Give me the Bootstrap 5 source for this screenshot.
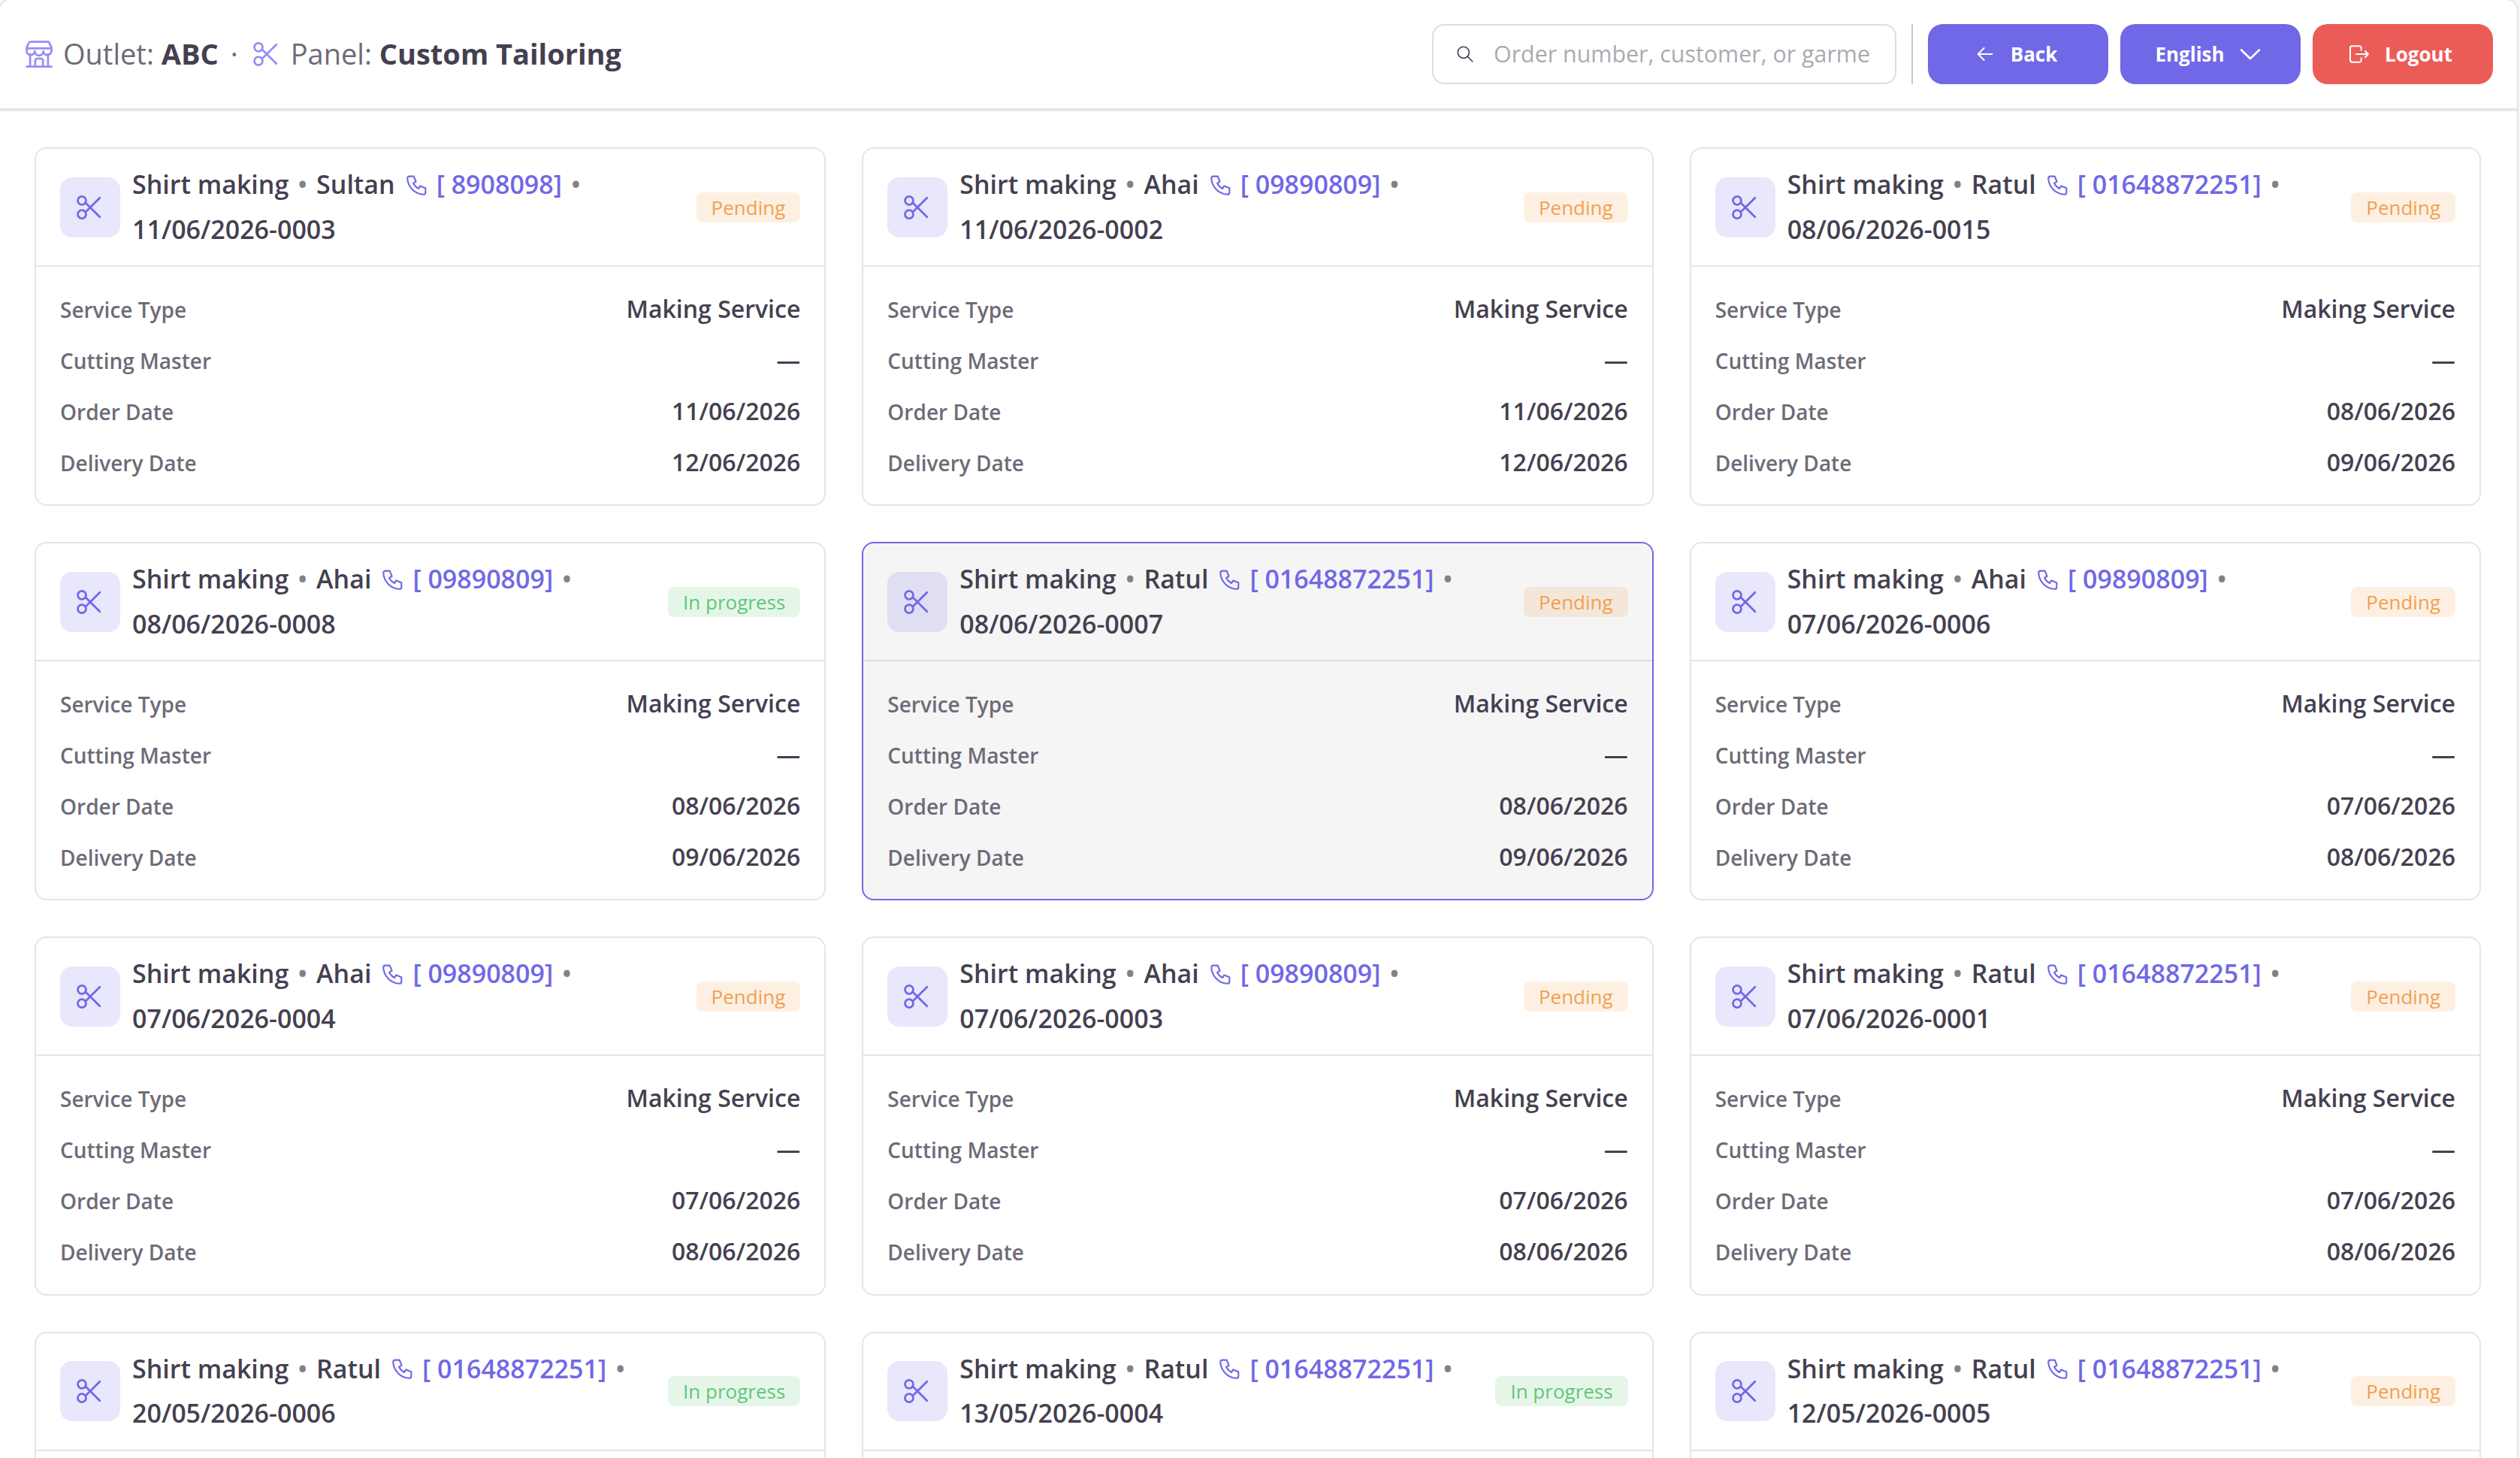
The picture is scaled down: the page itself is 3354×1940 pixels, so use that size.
<!DOCTYPE html>
<html lang="en">
<head>
  <meta charset="UTF-8" />
  <meta name="viewport" content="width=device-width, initial-scale=1.0"/>
  <title>Custom Tailoring</title>
  <link href="https://cdn.jsdelivr.net/npm/bootstrap@5.3.3/dist/css/bootstrap.min.css" rel="stylesheet"/>
  <style>
    :root {
      --brand: #7068e6;
      --heading: #444050;
      --soft: #6d6b77;
      --line: #e5e5e6;
    }

    body {
      height: 100vh;
      overflow: hidden;
      background-color: #f7f7f9;
      color: var(--heading);
      font-family: "Open Sans", "Noto Sans", sans-serif;
      font-size: 32px;
      line-height: 48px;
    }

    .icon {
      flex: none;
      fill: none;
      stroke: currentColor;
      stroke-width: 1.5;
      stroke-linecap: round;
      stroke-linejoin: round;
    }

    .panel {
      width: 3354px;
      min-height: 1942px;
      margin: -2px 0 0 -2px;
      border: 2px solid var(--line);
      border-radius: 16px 16px 0 0;
      background-color: #fff;
    }

    /* Top bar */
    .topbar {
      height: 148px;
      padding: 0 32px 0 30px;
      border-bottom: 4px solid #e6e6e8;
    }

    .crumb {
      font-size: 38px;
      color: var(--soft);
    }

    .crumb span {
      padding-bottom: 2px;
    }

    .crumb .icon {
      width: 44px;
      height: 44px;
      margin-right: 10px;
      color: #968ff3;
    }

    .crumb b {
      color: var(--heading);
      font-weight: 700;
    }

    .search-box {
      width: 618px;
      height: 80px;
      padding: 0 32px 0 29px;
      border: 2px solid #dededf;
      border-radius: 16px;
    }

    .search-box .icon {
      width: 26px;
      height: 26px;
    }

    .search-box input {
      margin-left: 25px;
      padding: 0;
      border: 0;
      font-size: 30.4px;
      background: transparent;
    }

    .search-box input::placeholder {
      color: #acaab1;
      opacity: 1;
    }

    .split {
      width: 2px;
      height: 80px;
      margin: 0 20px;
      background-color: #c9c8cd;
    }

    .top-btn {
      width: 240px;
      height: 80px;
      border: 0;
      border-radius: 20px;
      font-size: 26px;
      font-weight: 700;
      color: #fff;
    }

    .top-btn .icon {
      width: 32px;
      height: 32px;
      margin: 0 18px 0 -8px;
    }

    .top-btn .chevron {
      width: 44px;
      height: 44px;
      margin: 0 -1px 0 12px;
    }

    .btn-brand, .btn-brand:hover { background-color: var(--brand); color: #fff; }
    .btn-exit, .btn-exit:hover { background-color: #eb5c58; color: #fff; }

    /* Order cards */
    .orders {
      display: grid;
      grid-template-columns: repeat(3, 1fr);
      gap: 48px;
      padding: 48px 48px 48px 46px;
    }

    .order {
      border: 2px solid var(--line);
      border-radius: 16px;
      background-color: #fff;
    }

    .order.active {
      border-color: var(--brand);
      background-color: #f5f5f5;
    }

    .order .card-header {
      padding: 18px 32px;
      border-bottom: 2px solid var(--line);
      background: transparent;
    }

    .order.active .card-header {
      border-bottom-color: #dcdcdd;
    }

    .order .card-body {
      flex: none;
      height: 316.2px;
      padding: 32px;
      gap: 20px;
    }

    .tile {
      width: 80px;
      height: 80px;
      border-radius: 16px;
      background-color: rgba(112, 104, 230, .16);
      color: var(--brand);
    }

    .tile .icon {
      width: 44px;
      height: 44px;
    }

    .order-title {
      column-gap: 12px;
      font-size: 34px;
      font-weight: 600;
      line-height: 59.5px;
    }

    .order-title .dot {
      color: #82808b;
    }

    .order-title .tel {
      gap: 9px;
      color: var(--brand);
    }

    .order-title .tel .icon {
      width: 34px;
      height: 34px;
    }

    .status {
      height: 40px;
      padding: 0 20px;
      border-radius: 8px;
      font-size: 26px;
      line-height: 40px;
    }

    .status-pending { color: #f2a04f; background-color: rgba(240, 160, 80, .16); }
    .status-progress { color: #5fc678; background-color: rgba(95, 200, 120, .16); }

    .field-row {
      height: 48px;
    }

    .field-name {
      font-size: 28px;
      font-weight: 600;
      color: var(--soft);
    }

    .field-value {
      font-weight: 600;
    }
  </style>
</head>
<body>
  <!-- Icons -->
  <svg class="d-none">
    <symbol id="scissors" viewBox="0 0 24 24">
      <circle cx="6" cy="7" r="3"/><circle cx="6" cy="17" r="3"/>
      <path d="M8.6 8.6 19 19M8.6 15.4 19 5"/>
    </symbol>
    <symbol id="store" viewBox="0 0 24 24">
      <path d="M5.6 3h12.8c.5 0 .8.2 1 .7L21 7.3v2a2.9 2.9 0 0 1-5.9.6 3.1 3.1 0 0 1-6.2 0A2.9 2.9 0 0 1 3 9.3v-2l1.6-3.6c.2-.5.5-.7 1-.7z"/>
      <path d="M3.2 7.8h17.6M5.5 12v9M18.5 12v9M3 21.1h18M9.2 21v-4.3a1.5 1.5 0 0 1 1.5-1.5h2.6a1.5 1.5 0 0 1 1.5 1.5V21"/>
    </symbol>
    <symbol id="phone" viewBox="0 0 24 24">
      <path d="M5 4h4l2 5-2.5 1.5a11 11 0 0 0 5 5L15 13l5 2v4a2 2 0 0 1-2 2A16 16 0 0 1 3 6a2 2 0 0 1 2-2"/>
    </symbol>
    <symbol id="search" viewBox="0 0 24 24">
      <circle cx="10" cy="10" r="7"/><path d="m21 21-6-6"/>
    </symbol>
    <symbol id="arrow-left" viewBox="0 0 24 24">
      <path d="M5 12h14M5 12l6 6M5 12l6-6"/>
    </symbol>
    <symbol id="chevron-down" viewBox="0 0 24 24">
      <path d="m5.5 9 6.5 6.3L18.5 9"/>
    </symbol>
    <symbol id="logout" viewBox="0 0 24 24">
      <path d="M14 8V6a2 2 0 0 0-2-2H5a2 2 0 0 0-2 2v12a2 2 0 0 0 2 2h7a2 2 0 0 0 2-2v-2M9 12h12l-3-3M18 15l3-3"/>
    </symbol>
  </svg>

  <div class="panel">
    <!-- Top bar -->
    <header class="topbar d-flex align-items-center">
      <div class="crumb d-flex align-items-center me-auto">
        <svg class="icon"><use href="#store"/></svg>
        <span>Outlet: <b>ABC</b></span>
        <span class="px-3">·</span>
        <svg class="icon"><use href="#scissors"/></svg>
        <span>Panel: <b>Custom Tailoring</b></span>
      </div>
      <div class="search-box d-flex align-items-center">
        <svg class="icon"><use href="#search"/></svg>
        <input type="text" class="form-control shadow-none" placeholder="Order number, customer, or garme">
      </div>
      <div class="split"></div>
      <div class="d-flex gap-3">
        <button class="btn btn-brand top-btn d-flex align-items-center justify-content-center">
          <svg class="icon"><use href="#arrow-left"/></svg>Back
        </button>
        <button class="btn btn-brand top-btn d-flex align-items-center justify-content-center">
          English<svg class="icon chevron"><use href="#chevron-down"/></svg>
        </button>
        <button class="btn btn-exit top-btn d-flex align-items-center justify-content-center">
          <svg class="icon"><use href="#logout"/></svg>Logout
        </button>
      </div>
    </header>

    <!-- Orders -->
    <main class="orders" id="orderList"></main>
  </div>

  <script src="https://cdn.jsdelivr.net/npm/bootstrap@5.3.3/dist/js/bootstrap.bundle.min.js"></script>
  <script>
    const orders = [
      { customer: 'Sultan', phone: '8908098', no: '11/06/2026-0003', due: '12/06/2026' },
      { customer: 'Ahai', phone: '09890809', no: '11/06/2026-0002', due: '12/06/2026' },
      { customer: 'Ratul', phone: '01648872251', no: '08/06/2026-0015', due: '09/06/2026' },
      { customer: 'Ahai', phone: '09890809', no: '08/06/2026-0008', due: '09/06/2026', progress: true },
      { customer: 'Ratul', phone: '01648872251', no: '08/06/2026-0007', due: '09/06/2026', active: true },
      { customer: 'Ahai', phone: '09890809', no: '07/06/2026-0006', due: '08/06/2026' },
      { customer: 'Ahai', phone: '09890809', no: '07/06/2026-0004', due: '08/06/2026' },
      { customer: 'Ahai', phone: '09890809', no: '07/06/2026-0003', due: '08/06/2026' },
      { customer: 'Ratul', phone: '01648872251', no: '07/06/2026-0001', due: '08/06/2026' },
      { customer: 'Ratul', phone: '01648872251', no: '20/05/2026-0006', progress: true },
      { customer: 'Ratul', phone: '01648872251', no: '13/05/2026-0004', progress: true },
      { customer: 'Ratul', phone: '01648872251', no: '12/05/2026-0005' }
    ];

    const field = (name, value) => `
      <div class="field-row d-flex justify-content-between align-items-baseline">
        <span class="field-name">${name}</span>
        <span class="field-value">${value}</span>
      </div>`;

    // Orders without a delivery date show the header only
    const details = o => !o.due ? '' : `
      ${field('Service Type', 'Making Service')}
      ${field('Cutting Master', '—')}
      ${field('Order Date', o.no.split('-')[0])}
      ${field('Delivery Date', o.due)}`;

    document.getElementById('orderList').innerHTML = orders.map(o => `
      <div class="card order ${o.active ? 'active' : ''}">
        <div class="card-header d-flex align-items-center gap-3">
          <div class="tile d-flex align-items-center justify-content-center flex-shrink-0">
            <svg class="icon"><use href="#scissors"/></svg>
          </div>
          <div class="order-title d-flex flex-wrap align-items-center flex-grow-1">
            <span>Shirt making</span>
            <span class="dot">•</span>
            <span>${o.customer}</span>
            <span class="tel d-flex align-items-center">
              <svg class="icon"><use href="#phone"/></svg>[ ${o.phone}]
            </span>
            <span class="dot">•</span>
            <span>${o.no}</span>
          </div>
          <span class="status text-nowrap ${o.progress ? 'status-progress' : 'status-pending'}">${o.progress ? 'In progress' : 'Pending'}</span>
        </div>
        <div class="card-body d-flex flex-column">${details(o)}</div>
      </div>`).join('');
  </script>
</body>
</html>
